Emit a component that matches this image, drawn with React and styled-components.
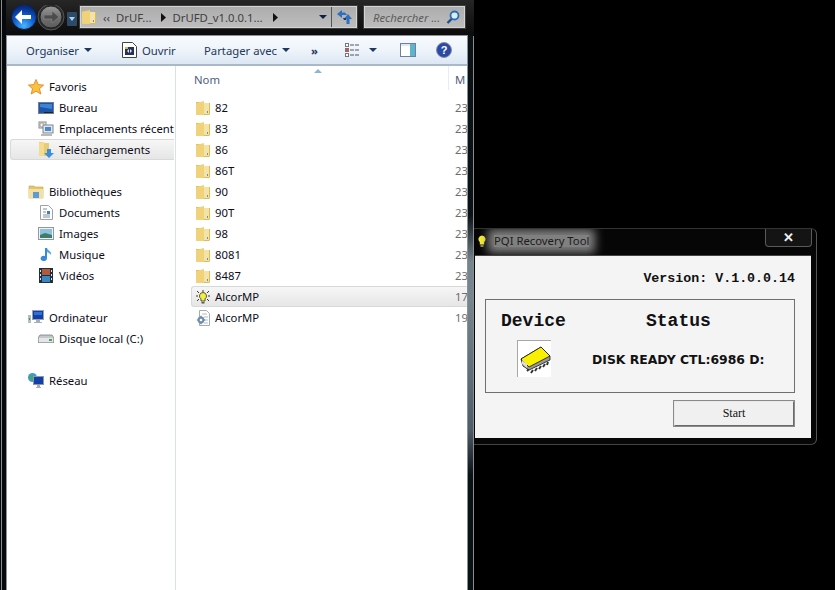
import React from "react";
import styled, { createGlobalStyle } from "styled-components";

const GlobalStyle = createGlobalStyle`
    html, body { margin: 0; padding: 0; background: #000; }
    * { box-sizing: border-box; }
`;

const Desktop = styled.div`
    position: relative;
    width: 835px;
    height: 590px;
    background: #000;
    overflow: hidden;
    font-family: "Noto Sans", "Open Sans", sans-serif;
    font-size: 11.3px;
`;

/* Explorer window */
const Explorer = styled.div`
    position: absolute;
    left: 0;
    top: 0;
    width: 474px;
    height: 590px;
    display: flex;
    flex-direction: column;
    padding: 0 6px 0 6px;
    background:
        linear-gradient(#8c8c8c, #8c8c8c) no-repeat 1px 0 / 1px 100%,
        linear-gradient(#8c8c8c, #8c8c8c) no-repeat 473px 36px / 1px 100%,
        linear-gradient(180deg, #0b1216 0, #0b1216 215px, #75858f 262px, #75858f 300px, #4d5d6a 430px, #0b1216 475px) no-repeat 468px 0 / 5px 100%,
        #05090c;
`;

const NavBar = styled.div`
    height: 35px;
    flex: none;
    display: flex;
    align-items: flex-start;
    padding: 5px 0 0 1px;
    margin: 0 -6px 0 0;
    background: linear-gradient(180deg, #262626 0, #161616 60%, #0c0c0c 100%);
`;

const NavButtons = styled.div`
    width: 73px;
    height: 26px;
    flex: none;
`;

const AddressBar = styled.div`
    width: 277px;
    height: 22px;
    margin-top: 1px;
    flex: none;
    display: flex;
    align-items: center;
    background: linear-gradient(180deg, #adadad, #bdbdbd);
    border: 1px solid #d4d4d4;
    outline: 1px solid #3c3c3c;
    color: #3f3f3f;
    white-space: nowrap;
`;

const Crumbs = styled.div`
    flex: 1;
    min-width: 0;
    display: flex;
    align-items: center;
    height: 100%;
    border-right: 1px solid #555;
    padding-left: 1px;
`;

const Refresh = styled.div`
    width: 24px;
    flex: none;
    display: flex;
    justify-content: center;
    align-items: center;
`;

const Crumb = styled.span`
    margin-left: ${(p) => p.$gap}px;
    display: inline-flex;
    align-items: center;
`;

const SearchBox = styled.div`
    width: 101px;
    height: 22px;
    margin: 1px 0 0 7px;
    flex: none;
    display: flex;
    align-items: center;
    justify-content: space-between;
    padding: 0 4px 0 8px;
    background: linear-gradient(180deg, #adadad, #bdbdbd);
    border: 1px solid #d4d4d4;
    outline: 1px solid #3c3c3c;
    color: #5c5c5c;
    font-style: italic;
    white-space: nowrap;
`;

const Content = styled.div`
    flex: 1;
    min-height: 0;
    display: flex;
    flex-direction: column;
    background: #fff;
    border: 1px solid #8c9199;
    border-bottom: 0;
`;

const Toolbar = styled.div`
    height: 30px;
    flex: none;
    display: flex;
    align-items: center;
    padding-left: 19px;
    color: #1e395b;
    background: linear-gradient(180deg, #f8fbfe 0, #eef4fa 50%, #dce7f4 100%);
    border-bottom: 2px solid #aab8cc;
    white-space: nowrap;
`;

const ToolItem = styled.div`
    width: ${(p) => p.$width}px;
    flex: none;
    display: flex;
    align-items: center;
    gap: ${(p) => p.$gap || 5}px;
`;

const Caret = styled.span`
    display: inline-block;
    width: 0;
    height: 0;
    border-left: 4px solid transparent;
    border-right: 4px solid transparent;
    border-top: 4px solid ${(p) => p.$color || "#1e395b"};
`;

const Panes = styled.div`
    flex: 1;
    min-height: 0;
    display: flex;
`;

const Sidebar = styled.div`
    width: 169px;
    flex: none;
    padding: 10px 1px 0 3px;
    border-right: 1px solid #d6e1ef;
    overflow: hidden;
`;

const NavRow = styled.div`
    height: 21px;
    display: flex;
    align-items: center;
    gap: 5px;
    padding-left: ${(p) => (p.$child ? 27 : 17)}px;
    margin-bottom: ${(p) => (p.$gapAfter ? 21 : 0)}px;
    color: #0d0d1a;
    white-space: nowrap;
    border: 1px solid ${(p) => (p.$selected ? "#d9d9d9" : "transparent")};
    border-right: 0;
    border-radius: 3px 0 0 3px;
    background: ${(p) => (p.$selected ? "linear-gradient(180deg, #f6f6f6, #e6e6e6)" : "none")};
`;

const IconSlot = styled.span`
    width: ${(p) => p.$size || 16}px;
    flex: none;
    display: flex;
    align-items: center;
    justify-content: center;
`;

const FileList = styled.div`
    flex: 1;
    min-width: 0;
    position: relative;
    overflow: hidden;
`;

const ColumnHeader = styled.div`
    height: 31px;
    display: flex;
    color: #4c607a;
    padding-top: 6px;
`;

const NameHead = styled.div`
    width: 273px;
    padding-left: 18px;
    flex: none;
    position: relative;
`;

const HeadDivider = styled.span`
    position: absolute;
    right: 0;
    top: -6px;
    width: 1px;
    height: 24px;
    background: #e6ecf5;
`;

const DateHead = styled.div`
    padding-left: 6px;
`;

const SortMark = styled.span`
    position: absolute;
    left: 138px;
    top: 3px;
    width: 0;
    height: 0;
    border-left: 4px solid transparent;
    border-right: 4px solid transparent;
    border-bottom: 4px solid #8fb4d0;
`;

const FileRow = styled.div`
    height: 21px;
    display: flex;
    align-items: center;
    margin-left: 15px;
    color: #0d0d1a;
    border: 1px solid ${(p) => (p.$selected ? "#d9d9d9" : "transparent")};
    border-right: 0;
    border-radius: 3px 0 0 3px;
    background: ${(p) => (p.$selected ? "linear-gradient(180deg, #f6f6f6, #e6e6e6)" : "none")};
`;

const FileName = styled.div`
    width: 263px;
    flex: none;
    display: flex;
    align-items: center;
    gap: 5px;
    padding-left: 4px;
`;

const FileDate = styled.div`
    color: #6d6d6d;
`;

/* Recovery tool dialog */
const Dialog = styled.div`
    position: absolute;
    left: 474px;
    top: 228px;
    width: 343px;
    height: 217px;
    display: flex;
    flex-direction: column;
    padding: 0 5px 6px 1px;
    background: #060606;
    border-right: 1px solid #555;
    border-bottom: 1px solid #444;
    border-top: 1px solid #333;
    border-radius: 0 6px 6px 0;
    overflow: hidden;
`;

const TitleBar = styled.div`
    height: 26px;
    flex: none;
    display: flex;
    justify-content: space-between;
    color: #1c1c1c;
`;

const TitleLeft = styled.div`
    display: flex;
    align-items: center;
    gap: 8px;
    padding: 0 0 0 3px;
    height: 24px;
`;

const TitleLabel = styled.span`
    background: #808080;
    box-shadow: 0 0 10px 6px #808080;
    height: 12px;
    line-height: 12px;
`;

const CloseButton = styled.div`
    width: 47px;
    height: 18px;
    margin-right: -1px;
    display: flex;
    align-items: center;
    justify-content: center;
    color: #f0f0f0;
    font: bold 13px "Liberation Sans", sans-serif;
    background: #141414;
    border: 1px solid #5a5a5a;
    border-top: 0;
    border-radius: 0 0 4px 4px;
`;

const DialogBody = styled.div`
    flex: 1;
    display: flex;
    flex-direction: column;
    background: #f4f4f4;
    padding: 15px 16px 0 10px;
    border-top: 1px solid #444;
`;

const Version = styled.div`
    text-align: right;
    height: 28px;
    font: bold 13.3px "Liberation Mono", monospace;
    color: #111;
`;

const GroupBox = styled.div`
    width: 310px;
    height: 94px;
    border: 1px solid #6f6f6f;
    display: grid;
    grid-template-columns: 106px 1fr;
    grid-template-rows: 40px 1fr;
    padding-left: 15px;
`;

const Heading = styled.div`
    font: bold 18px "Liberation Mono", monospace;
    color: #111;
    padding-top: 11px;
    margin-left: ${(p) => p.$indent || 0}px;
`;

const ChipBox = styled.div`
    margin-left: 16px;
    width: 34px;
    height: 37px;
    background: #fff;
    border-left: 1px solid #a8a8a8;
    border-top: 1px solid #a8a8a8;
    display: flex;
    align-items: center;
    justify-content: center;
`;

const StatusText = styled.div`
    font: bold 12.4px "DejaVu Sans", sans-serif;
    color: #111;
    margin: 12px 0 0 -15px;
    white-space: nowrap;
`;

const StartRow = styled.div`
    display: flex;
    justify-content: flex-end;
    margin-top: 7px;
    width: 310px;
`;

const StartButton = styled.div`
    width: 122px;
    height: 27px;
    display: flex;
    align-items: center;
    justify-content: center;
    background: #f0f0f0;
    font: 12px "Liberation Serif", serif;
    color: #111;
    border: 2px solid;
    border-color: #e8e8e8 #6a6a6a #6a6a6a #e8e8e8;
    outline: 1px solid #8a8a8a;
    outline-offset: -1px;
`;

/* Icons */
const Folder = () => (
    <svg width="14" height="16" viewBox="0 0 14 16" style={{ flex: "none" }}>
        <path d="M0 2 h5 l1 1 h8 v11 l-1 1 H1 l-1-1z" fill="#dfbb58" />
        <path d="M0 3 L8 1 V15 H1 L0 14z" fill="#efd27a" />
        <path d="M8 3 h5 v11 h-5z" fill="#f4e3a4" />
        <path d="M11 11h1v2h-1z" fill="#4a9ad4" />
    </svg>
);

const Star = () => (
    <svg width="16" height="16" viewBox="0 0 16 16">
        <path d="M8 .5 10.2 5.6 15.6 6.1 11.5 9.7 12.8 15 8 12.2 3.2 15 4.5 9.7.4 6.1 5.8 5.6z" fill="#f7c33f" stroke="#e07a22" strokeWidth=".8" />
    </svg>
);

const Monitor = () => (
    <svg width="16" height="14" viewBox="0 0 16 14">
        <rect x=".5" y="1.5" width="15" height="11" fill="#1f55a8" stroke="#6f7f93" />
        <path d="M2 3h12v5L2 6z" fill="#3e84d6" />
        <path d="M6 11h9v1H6z" fill="#222" />
    </svg>
);

const Recent = () => (
    <svg width="16" height="16" viewBox="0 0 16 16">
        <rect x="1" y="1" width="7" height="6" fill="#e8e8e8" stroke="#8a8a8a" />
        <circle cx="4" cy="4" r="2" fill="#fff" stroke="#777" strokeWidth=".6" />
        <rect x="5" y="4" width="10" height="8" fill="#dfe6ee" stroke="#7d8894" />
        <rect x="7" y="6" width="6" height="4" fill="#4f88c6" />
        <path d="M3 13h11v2H3z" fill="#b9b9b9" />
    </svg>
);

const Downloads = () => (
    <svg width="16" height="17" viewBox="0 0 16 17">
        <path d="M1 1h4l1 1h5v13H1z" fill="#e9cc72" />
        <path d="M1 2l5-1v14H1z" fill="#f4dc8f" />
        <path d="M9 8h4v4h3l-5 5-5-5h3z" fill="#3a8fdc" />
    </svg>
);

const Library = () => (
    <svg width="16" height="16" viewBox="0 0 16 16">
        <path d="M1 2h5l1 1h8v11H1z" fill="#e5c46c" stroke="#c9a54c" strokeWidth=".6" />
        <path d="M1 5h14v9H1z" fill="#f4e0a0" />
        <path d="M5 8h6v6H5z" fill="#5d9bd6" />
    </svg>
);

const Doc = () => (
    <svg width="13" height="15" viewBox="0 0 13 15">
        <path d="M.5.5h8l4 4v10H.5z" fill="#fff" stroke="#9aa2ad" />
        <path d="M3 4h4M3 7h3M3 10h7M3 12h7" stroke="#7c8fa6" />
        <rect x="7" y="6" width="3" height="3" fill="#3f7fc0" />
    </svg>
);

const Picture = () => (
    <svg width="16" height="13" viewBox="0 0 16 13">
        <rect x=".5" y=".5" width="15" height="12" fill="#eef2f6" stroke="#8f99a5" />
        <rect x="2" y="2" width="12" height="9" fill="#8fc0dc" />
        <path d="M2 8 7 6l7 2v3H2z" fill="#3f7c68" />
    </svg>
);

const Note = () => (
    <svg width="14" height="16" viewBox="0 0 14 16">
        <path d="M8 1v10.5a3.2 2.6 0 1 1-2-2.4V1z" fill="#3a8bd6" />
        <path d="M8 1c1 3 5 3 4 7-1-2-3-2-4-3z" fill="#5aa7e6" />
    </svg>
);

const Film = () => (
    <svg width="14" height="15" viewBox="0 0 14 15">
        <rect width="14" height="15" fill="#20303c" />
        <rect x="3" y="1" width="8" height="6" fill="#b25a3c" />
        <rect x="3" y="8" width="8" height="6" fill="#3c86c2" />
        <path d="M1 2h1v2H1zM1 6h1v2H1zM1 10h1v2H1zM12 2h1v2h-1zM12 6h1v2h-1zM12 10h1v2h-1z" fill="#dfe6ee" />
    </svg>
);

const Computer = () => (
    <svg width="16" height="15" viewBox="0 0 16 15">
        <rect x="4.5" y=".5" width="11" height="9" fill="#123fa8" stroke="#9aa3ad" />
        <path d="M6 2h8v3H6z" fill="#2e6fdc" />
        <path d="M8 10h4v2h2v1H6v-1h2z" fill="#a7adb4" />
        <rect y="5" width="3" height="8" fill="#b5bcc4" />
        <rect x="1" y="8" width="1" height="2" fill="#3c9a4a" />
    </svg>
);

const Drive = () => (
    <svg width="16" height="9" viewBox="0 0 16 9">
        <path d="M2 1h12l2 3v4l-1 1H1L0 8V4z" fill="#c4c7cb" stroke="#6d7177" strokeWidth=".7" />
        <rect x="1" y="4" width="14" height="4" fill="#e5e6e8" />
        <rect x="11" y="5" width="3" height="2" fill="#4ca84e" />
    </svg>
);

const Network = () => (
    <svg width="16" height="16" viewBox="0 0 16 16">
        <circle cx="4.5" cy="4.5" r="4.5" fill="#3e9ad6" />
        <path d="M1 3l3-1 2 2-2 3-2-2z" fill="#4ca84e" />
        <rect x="5.5" y="3.5" width="10" height="8" fill="#123fa8" stroke="#8f98a3" />
        <path d="M9 12h3v2h1v1H8v-1h1z" fill="#a7adb4" />
    </svg>
);

const Bulb = () => (
    <svg width="14" height="14" viewBox="0 0 14 14" style={{ flex: "none" }}>
        <path d="M7 0v2M1 1l2 2M13 1l-2 2M0 6h2M12 6h2M1 11l2-2M13 11l-2-2" stroke="#222" strokeWidth=".9" />
        <path d="M7 2.5a3.5 3.5 0 0 1 2 6.4V11H5V8.9A3.5 3.5 0 0 1 7 2.5z" fill="#f5ef3a" stroke="#333" strokeWidth=".8" />
        <path d="M5.5 12h3v1.5h-3z" fill="#555" />
    </svg>
);

const TitleBulb = () => (
    <svg width="8" height="13" viewBox="0 0 8 13" style={{ flex: "none" }}>
        <path d="M4 .5a3.6 3.6 0 0 1 2.2 6.4V9.5H1.8V6.9A3.6 3.6 0 0 1 4 .5z" fill="#f6ef2e" />
        <path d="M2.5 10h3v2h-3z" fill="#8a8a6a" />
    </svg>
);

const ConfigFile = () => (
    <svg width="15" height="16" viewBox="0 0 15 16" style={{ flex: "none" }}>
        <path d="M3.5.5h7l3 3v12h-10z" fill="#fff" stroke="#a5abb3" />
        <path d="M6 4h5M8 7h4M8 10h4M8 13h4" stroke="#b5bbc3" />
        <circle cx="5" cy="10" r="3.4" fill="#6f8fae" />
        <circle cx="5" cy="10" r="1.3" fill="#fff" />
        <path d="M5 5.8v1.5M5 12.7v1.5M.8 10h1.5M7.7 10h1.5" stroke="#5b7a99" strokeWidth="1.2" />
    </svg>
);

const Chip = () => (
    <svg width="32" height="30" viewBox="0 0 32 30">
        <path d="M8 27l2-2M12 29l2-3M16 27l2-3M20 25l2-3M24 23l2-3M28 21l1-3" stroke="#333" strokeWidth="2" />
        <path d="M2 15 L22 3 L31 12 V16 L10 26 L4 22z" fill="#999" stroke="#111" strokeWidth=".8" />
        <path d="M2 15 L22 3 L31 12 L10 23z" fill="#f8f000" stroke="#111" strokeWidth=".8" />
        <path d="M3 16l5 4v4l-5-4z" fill="#ddd" />
    </svg>
);

const OpenIcon = () => (
    <svg width="15" height="16" viewBox="0 0 15 16">
        <path d="M.5.5h10l4 4v11H.5z" fill="#fff" stroke="#444" />
        <rect x="3" y="5" width="9" height="8" fill="#24325c" />
        <path d="M5 9l2-2v4zM10 9L8 7v4z" fill="#e8e8e8" />
        <rect x="3" y="5" width="3" height="2" fill="#d6b84a" />
    </svg>
);

const ViewIcon = () => (
    <svg width="15" height="15" viewBox="0 0 15 15">
        <rect x=".5" y=".5" width="3" height="3" fill="#fff" stroke="#777" />
        <rect x=".5" y="5.5" width="3" height="3" fill="#e44" stroke="#777" />
        <rect x=".5" y="10.5" width="3" height="3" fill="#fff" stroke="#777" />
        <path d="M5 2h4M10 2h4M5 7h4M10 7h4M5 12h4M10 12h4" stroke="#556" />
    </svg>
);

const PaneIcon = () => (
    <svg width="16" height="14" viewBox="0 0 16 14">
        <rect x=".5" y=".5" width="15" height="13" fill="#fff" stroke="#6f8196" />
        <rect x="10" y="1" width="5" height="12" fill="#5db4cf" />
        <rect x="1" y="1" width="9" height="2" fill="#dfe8f2" />
    </svg>
);

const HelpIcon = () => (
    <svg width="16" height="16" viewBox="0 0 16 16">
        <circle cx="8" cy="8" r="7.5" fill="#2a4aa8" stroke="#8a8f9a" />
        <text x="8" y="12" textAnchor="middle" fontSize="11" fontWeight="700" fontFamily="Liberation Sans" fill="#fff">?</text>
    </svg>
);

const RefreshIcon = () => (
    <svg width="17" height="16" viewBox="0 0 17 16">
        <path d="M1 5l5-4v2.5h3L11 6H6v3z" fill="#2f6fc0" />
        <path d="M12 5l4 5h-2.5v5h-3v-5H8z" fill="#2f6fc0" />
        <path d="M7 9h3v2H8z" fill="#143a6e" />
    </svg>
);

const SearchIcon = () => (
    <svg width="14" height="15" viewBox="0 0 14 15">
        <circle cx="8.5" cy="5.5" r="4" fill="#dcebf6" stroke="#2a6db4" strokeWidth="1.8" />
        <path d="M5.5 9 1.5 13" stroke="#1f4f90" strokeWidth="2.4" />
    </svg>
);

const NavArrows = () => (
    <svg width="73" height="26" viewBox="0 0 73 26">
        <defs>
            <radialGradient id="backBlue" cx=".5" cy=".85" r=".75">
                <stop offset="0" stopColor="#4ab4ff" />
                <stop offset=".55" stopColor="#0f5fd0" />
                <stop offset="1" stopColor="#072a80" />
            </radialGradient>
            <linearGradient id="fwdGrey" x1="0" x2="0" y1="0" y2="1">
                <stop offset="0" stopColor="#9a9a9a" />
                <stop offset=".5" stopColor="#707070" />
                <stop offset="1" stopColor="#5c5c5c" />
            </linearGradient>
        </defs>
        <circle cx="44" cy="12" r="13" fill="#2a2a2a" stroke="#555" />
        <circle cx="44" cy="12" r="11" fill="url(#fwdGrey)" stroke="#222" />
        <path d="M52 12l-7-6v4h-8v4h8v4z" fill="#4c4c4c" stroke="#8a8a8a" strokeWidth=".6" />
        <circle cx="17" cy="12" r="12.5" fill="url(#backBlue)" stroke="#10203c" />
        <path d="M8 12l7-7v5h9v4h-9v5z" fill="#fff" />
        <rect x="60" y="7" width="10" height="14" rx="1" fill="#2e4a66" />
        <path d="M62 12h6l-3 4z" fill="#a9d4f5" />
    </svg>
);

const Triangle = () => (
    <svg width="7" height="9" viewBox="0 0 7 9"><path d="M1 0l5 4.5L1 9z" fill="#111" /></svg>
);

const navGroups = [
    { label: "Favoris", icon: <Star /> },
    { label: "Bureau", icon: <Monitor />, child: true },
    { label: "Emplacements récent", icon: <Recent />, child: true },
    { label: "Téléchargements", icon: <Downloads />, child: true, selected: true, gapAfter: true },
    { label: "Bibliothèques", icon: <Library /> },
    { label: "Documents", icon: <Doc />, child: true },
    { label: "Images", icon: <Picture />, child: true },
    { label: "Musique", icon: <Note />, child: true },
    { label: "Vidéos", icon: <Film />, child: true, gapAfter: true },
    { label: "Ordinateur", icon: <Computer /> },
    { label: "Disque local (C:)", icon: <Drive />, child: true, gapAfter: true },
    { label: "Réseau", icon: <Network /> },
];

const files = [
    ...["82", "83", "86", "86T", "90", "90T", "98", "8081", "8487"].map((name) => ({ name, icon: <Folder />, date: "23" })),
    { name: "AlcorMP", icon: <Bulb />, date: "17", selected: true },
    { name: "AlcorMP", icon: <ConfigFile />, date: "19" },
];

export default function App() {
    return (
        <Desktop>
            <GlobalStyle />
            <Explorer>
                <NavBar>
                    <NavButtons><NavArrows /></NavButtons>
                    <AddressBar>
                        <Crumbs>
                            <Folder />
                            <Crumb $gap={7}>‹‹</Crumb>
                            <Crumb $gap={6}>DrUF...</Crumb>
                            <Crumb $gap={9}><Triangle /></Crumb>
                            <Crumb $gap={5}>DrUFD_v1.0.0.1...</Crumb>
                            <Crumb $gap={9}><Triangle /></Crumb>
                            <Crumb $gap={40}><Caret $color="#10204a" /></Crumb>
                        </Crumbs>
                        <Refresh><RefreshIcon /></Refresh>
                    </AddressBar>
                    <SearchBox>
                        <span>Rechercher ...</span>
                        <SearchIcon />
                    </SearchBox>
                </NavBar>
                <Content>
                    <Toolbar>
                        <ToolItem $width={96}>Organiser <Caret /></ToolItem>
                        <ToolItem $width={82}><OpenIcon />Ouvrir</ToolItem>
                        <ToolItem $width={107}>Partager avec <Caret /></ToolItem>
                        <ToolItem $width={34}><b>»</b></ToolItem>
                        <ToolItem $width={55} $gap={9}><ViewIcon /><Caret /></ToolItem>
                        <ToolItem $width={36}><PaneIcon /></ToolItem>
                        <ToolItem $width={16}><HelpIcon /></ToolItem>
                    </Toolbar>
                    <Panes>
                        <Sidebar>
                            {navGroups.map((item) => (
                                <NavRow key={item.label} $child={item.child} $selected={item.selected} $gapAfter={item.gapAfter}>
                                    <IconSlot>{item.icon}</IconSlot>
                                    <span>{item.label}</span>
                                </NavRow>
                            ))}
                        </Sidebar>
                        <FileList>
                            <SortMark />
                            <ColumnHeader>
                                <NameHead>Nom<HeadDivider /></NameHead>
                                <DateHead>M</DateHead>
                            </ColumnHeader>
                            {files.map((file, i) => (
                                <FileRow key={i} $selected={file.selected}>
                                    <FileName><IconSlot $size={14}>{file.icon}</IconSlot>{file.name}</FileName>
                                    <FileDate>{file.date}</FileDate>
                                </FileRow>
                            ))}
                        </FileList>
                    </Panes>
                </Content>
            </Explorer>
            <Dialog>
                <TitleBar>
                    <TitleLeft><TitleBulb /><TitleLabel>PQI Recovery Tool</TitleLabel></TitleLeft>
                    <CloseButton>✕</CloseButton>
                </TitleBar>
                <DialogBody>
                    <Version>Version: V.1.0.0.14</Version>
                    <GroupBox>
                        <Heading>Device</Heading>
                        <Heading $indent={39}>Status</Heading>
                        <ChipBox><Chip /></ChipBox>
                        <StatusText>DISK READY CTL:6986 D:</StatusText>
                    </GroupBox>
                    <StartRow><StartButton>Start</StartButton></StartRow>
                </DialogBody>
            </Dialog>
        </Desktop>
    );
}
